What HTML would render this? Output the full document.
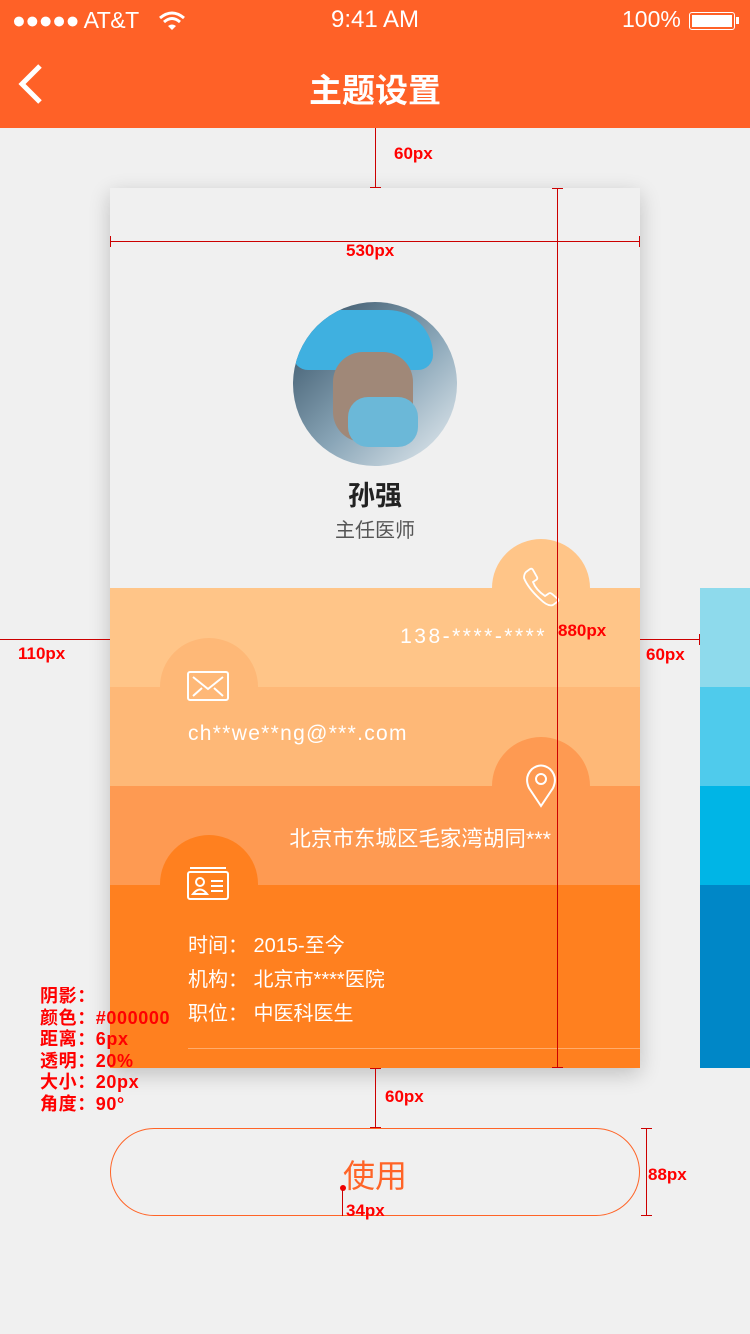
<!DOCTYPE html>
<html><head><meta charset="utf-8"><style>
*{margin:0;padding:0;box-sizing:border-box}
body{width:750px;height:1334px;background:#f0f0f0;position:relative;overflow:hidden;font-family:"Liberation Sans","Noto Sans CJK SC",sans-serif}
.a{position:absolute}
.red{color:#f00;font-weight:bold;font-size:17px;font-family:"Liberation Sans","Noto Sans CJK SC",sans-serif}
.w{color:#fff}
</style></head><body>
<div class="a" style="left:0;top:0;width:750px;height:128px;background:#FF6127"></div>
<div class="a w" style="left:12px;top:7px;font-size:23px;letter-spacing:-0.5px">●●●●● AT&amp;T</div>
<svg class="a" style="left:158px;top:10px" width="28" height="22" viewBox="0 0 28 22"><path d="M2 8 Q14 -2 26 8" stroke="#fff" stroke-width="3" fill="none"/><path d="M6 12 Q14 5 22 12" stroke="#fff" stroke-width="3" fill="none"/><path d="M10 16 L14 20 L18 16 Q14 13 10 16Z" fill="#fff"/></svg>
<div class="a w" style="left:0;width:750px;text-align:center;top:6px;font-size:24px">9:41 AM</div>
<div class="a w" style="left:622px;top:6px;font-size:23px">100%</div>
<div class="a" style="left:689px;top:12px;width:46px;height:18px;border:1.5px solid #fff;border-radius:3px;padding:2px"><div style="background:#fff;width:100%;height:100%"></div></div>
<div class="a" style="left:736px;top:17px;width:3px;height:7px;background:#fff"></div>
<svg class="a" style="left:14px;top:62px" width="30" height="44"><path d="M26 4 L8 22 L26 40" stroke="#fff" stroke-width="5" fill="none"/></svg>
<div class="a w" style="left:0;width:750px;text-align:center;top:64px;font-size:33px;font-weight:bold">主题设置</div>

<!-- card -->
<div class="a" style="left:110px;top:188px;width:530px;height:880px;background:#f0f0f0;box-shadow:0 6px 20px rgba(0,0,0,.2);overflow:hidden">
<div class="a" style="left:183px;top:114px;width:164px;height:164px;border-radius:50%;overflow:hidden;background:linear-gradient(135deg,#2f4a5e,#8aa6b8 55%,#e8eef2)">
<div class="a" style="left:0;top:8px;width:140px;height:60px;border-radius:60px 60px 20px 20px;background:#3fb0e0"></div>
<div class="a" style="left:40px;top:50px;width:80px;height:90px;border-radius:30px;background:#a08878"></div>
<div class="a" style="left:55px;top:95px;width:70px;height:50px;border-radius:20px;background:#6bb8d8"></div>
</div>
<div class="a" style="left:0;width:530px;text-align:center;top:286px;font-size:27px;font-weight:bold;color:#222">孙强</div>
<div class="a" style="left:0;width:530px;text-align:center;top:326px;font-size:20px;color:#555">主任医师</div>

<div class="a" style="left:382px;top:351px;width:98px;height:98px;border-radius:50%;background:#FFC588"></div>
<div class="a" style="left:0;top:400px;width:530px;height:99px;background:#FFC588"></div>
<div class="a" style="left:50px;top:450px;width:98px;height:98px;border-radius:50%;background:#FEB877"></div>
<div class="a" style="left:0;top:499px;width:530px;height:99px;background:#FEB877"></div>
<div class="a" style="left:382px;top:549px;width:98px;height:98px;border-radius:50%;background:#FE9A52"></div>
<div class="a" style="left:0;top:598px;width:530px;height:99px;background:#FE9A52"></div>
<div class="a" style="left:50px;top:647px;width:98px;height:98px;border-radius:50%;background:#FF801F"></div>
<div class="a" style="left:0;top:697px;width:530px;height:183px;background:#FF801F"></div>

<svg class="a" style="left:408px;top:378px" width="46" height="46" viewBox="0 0 46 46"><path d="M8 6 L12 3 Q14 2 15 4 L19 11 Q20 13 18 14 L15 16 Q18 24 27 30 L30 28 Q32 26 34 28 L40 33 Q41 35 39 36 L35 39 Q30 41 22 33 Q10 22 6 12 Q6 8 8 6Z" fill="none" stroke="#fff" stroke-width="1.8"/></svg>
<div class="a w" style="right:93px;top:437px;font-size:21px;letter-spacing:2.5px">138-****-****</div>
<svg class="a" style="left:77px;top:483px" width="42" height="30"><rect x="1" y="1" width="40" height="28" rx="2" fill="none" stroke="#fff" stroke-width="2"/><path d="M6 6 L21 18 L36 6 M6 25 L15 17 M36 25 L27 17" stroke="#fff" stroke-width="2" fill="none"/></svg>
<div class="a w" style="left:78px;top:534px;font-size:21px;letter-spacing:1.3px">ch**we**ng@***.com</div>
<svg class="a" style="left:415px;top:576px" width="32" height="44" viewBox="0 0 32 44"><path d="M16 42 L4 24 Q-1 13 7 5 Q16 -2 25 5 Q33 13 28 24Z" fill="none" stroke="#fff" stroke-width="2"/><circle cx="16" cy="15" r="5" fill="none" stroke="#fff" stroke-width="2"/></svg>
<div class="a w" style="right:89px;top:634px;font-size:21.5px">北京市东城区毛家湾胡同***</div>
<svg class="a" style="left:77px;top:677px" width="42" height="36"><path d="M3 3 H39" stroke="#fff" stroke-width="2"/><rect x="1" y="7" width="40" height="27" rx="2" fill="none" stroke="#fff" stroke-width="2"/><circle cx="13" cy="17" r="4" fill="none" stroke="#fff" stroke-width="2"/><path d="M6 29 Q13 20 20 29Z" fill="none" stroke="#fff" stroke-width="2"/><path d="M24 16 H36 M24 21 H36 M24 26 H36" stroke="#fff" stroke-width="2"/></svg>
<div class="a w" style="left:78px;top:741px;font-size:20px;line-height:34px">时间：&nbsp;2015-至今<br>机构：&nbsp;北京市****医院<br>职位：&nbsp;中医科医生</div>
<div class="a" style="left:78px;top:860px;width:452px;height:1px;background:rgba(255,255,255,.35)"></div>
</div>

<div class="a" style="left:700px;top:588px;width:50px;height:99px;background:#8EDAEC"></div>
<div class="a" style="left:700px;top:687px;width:50px;height:99px;background:#4FCBEC"></div>
<div class="a" style="left:700px;top:786px;width:50px;height:99px;background:#00B5E6"></div>
<div class="a" style="left:700px;top:885px;width:50px;height:183px;background:#0087C7"></div>

<!-- annotations -->
<div class="a" style="left:375px;top:128px;width:1px;height:60px;background:#c00"></div>
<div class="a" style="left:370px;top:187px;width:11px;height:1px;background:#c00"></div>
<div class="a red" style="left:394px;top:144px">60px</div>
<div class="a" style="left:110px;top:241px;width:530px;height:1px;background:#c00"></div>
<div class="a" style="left:110px;top:236px;width:1px;height:11px;background:#c00"></div>
<div class="a" style="left:639px;top:236px;width:1px;height:11px;background:#c00"></div>
<div class="a red" style="left:346px;top:241px">530px</div>
<div class="a" style="left:557px;top:188px;width:1px;height:880px;background:#c00"></div>
<div class="a" style="left:552px;top:188px;width:11px;height:1px;background:#c00"></div>
<div class="a" style="left:552px;top:1067px;width:11px;height:1px;background:#c00"></div>
<div class="a red" style="left:558px;top:621px">880px</div>
<div class="a" style="left:0;top:639px;width:110px;height:1px;background:#c00"></div>
<div class="a red" style="left:18px;top:644px">110px</div>
<div class="a" style="left:640px;top:639px;width:60px;height:1px;background:#c00"></div>
<div class="a" style="left:699px;top:634px;width:1px;height:11px;background:#c00"></div>
<div class="a red" style="left:646px;top:645px">60px</div>
<div class="a red" style="left:40px;top:986px;line-height:21.5px;font-size:18px;letter-spacing:0.6px">阴影：<br>颜色：#000000<br>距离：6px<br>透明：20%<br>大小：20px<br>角度：90°</div>
<div class="a" style="left:375px;top:1068px;width:1px;height:60px;background:#c00"></div>
<div class="a" style="left:370px;top:1068px;width:11px;height:1px;background:#c00"></div>
<div class="a" style="left:370px;top:1127px;width:11px;height:1px;background:#c00"></div>
<div class="a red" style="left:385px;top:1087px">60px</div>

<div class="a" style="left:110px;top:1128px;width:530px;height:88px;border:1px solid #FF6427;border-radius:44px"></div>
<div class="a" style="left:0;width:750px;text-align:center;top:1151px;font-size:32px;color:#FF6427">使用</div>
<div class="a" style="left:340px;top:1185px;width:6px;height:6px;border-radius:50%;background:#e00"></div>
<div class="a" style="left:342px;top:1190px;width:1px;height:26px;background:#c00"></div>
<div class="a red" style="left:346px;top:1201px">34px</div>
<div class="a" style="left:646px;top:1128px;width:1px;height:88px;background:#c00"></div>
<div class="a" style="left:641px;top:1128px;width:11px;height:1px;background:#c00"></div>
<div class="a" style="left:641px;top:1215px;width:11px;height:1px;background:#c00"></div>
<div class="a red" style="left:648px;top:1165px">88px</div>
</body></html>
